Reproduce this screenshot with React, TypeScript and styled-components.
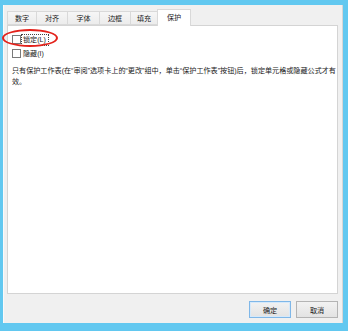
import styled, { createGlobalStyle } from 'styled-components';

const Global = createGlobalStyle`
  html, body { margin: 0; padding: 0; }
  body {
    font-family: "Liberation Sans", "Noto Sans CJK SC", sans-serif;
    font-size: 7.1px;
    color: #1a1a1a;
  }
`;

const Frame = styled.div`
  position: relative;
  box-sizing: border-box;
  width: 348px;
  height: 331px;
  background: #62c8f0;
  padding: 5px 5px 8px 3px;
  display: flex;
`;

const Dialog = styled.div`
  flex: 1;
  box-sizing: border-box;
  background: #f0f0f0;
  border-left: 1px solid #fafafa;
  border-right: 1px solid #d6d6d6;
  padding: 4px 3px 0 3px;
  display: flex;
  flex-direction: column;
`;

const TabRow = styled.div`
  display: flex;
  align-items: flex-end;
  height: 16px;
  padding-left: 1px;
`;

const Tab = styled.div<{ $w: number; $active?: boolean }>`
  box-sizing: border-box;
  width: ${p => p.$w}px;
  height: ${p => (p.$active ? 17 : 14)}px;
  margin-bottom: ${p => (p.$active ? -1 : 0)}px;
  display: flex;
  align-items: center;
  justify-content: center;
  border: 1px solid #d9d9d9;
  border-bottom: ${p => (p.$active ? 'none' : '1px solid #d9d9d9')};
  margin-left: -1px;
  background: ${p => (p.$active ? '#fff' : 'linear-gradient(#f6f6f6, #ececec)')};
  padding-bottom: ${p => (p.$active ? 3 : 0)}px;
  position: relative;
  z-index: ${p => (p.$active ? 1 : 0)};
`;

const Panel = styled.div`
  box-sizing: border-box;
  width: 331px;
  height: 269px;
  background: #fff;
  border: 1px solid #d4d4d4;
  padding: 8px 0 0 4px;
  display: flex;
  flex-direction: column;
`;

const CheckRow = styled.label`
  display: flex;
  align-items: center;
  height: 11px;
  margin-bottom: 3px;
`;

const Box = styled.span`
  box-sizing: border-box;
  width: 9px;
  height: 9px;
  border: 1px solid #7a7a7a;
  background: #fff;
  margin-right: 1px;
`;

const Label = styled.span<{ $focus?: boolean }>`
  padding: 0 2px 0 1px;
  line-height: 10px;
  outline: ${p => (p.$focus ? '1px dotted #444' : 'none')};
  outline-offset: 0;
`;

const Note = styled.p`
  margin: 4px 0 0 0;
  width: 325px;
  line-height: 11px;
  line-break: anywhere;
`;

const Footer = styled.div`
  display: flex;
  justify-content: flex-end;
  gap: 5px;
  padding-top: 7px;
  padding-right: 1px;
`;

const Button = styled.div<{ $primary?: boolean }>`
  box-sizing: border-box;
  width: 42px;
  height: 17px;
  display: flex;
  align-items: center;
  justify-content: center;
  border: 1px solid ${p => (p.$primary ? '#7fb7e8' : '#b4b4b4')};
  box-shadow: ${p => (p.$primary ? 'inset 0 0 0 1px #d6e9fa' : 'none')};
  background: linear-gradient(#f2f2f2, #e3e3e3);
`;

const Ellipse = styled.div`
  position: absolute;
  left: 2px;
  top: 29px;
  width: 56px;
  height: 18px;
  box-sizing: border-box;
  border: 2px solid #e3221b;
  border-radius: 50%;
`;

const tabs: [string, number][] = [
  ['数字', 30],
  ['对齐', 32],
  ['字体', 33],
  ['边框', 32],
  ['填充', 28],
];

export default function App() {
  return (
    <Frame>
      <Global />
      <Dialog>
        <TabRow>
          {tabs.map(([t, w]) => (
            <Tab key={t} $w={w}>{t}</Tab>
          ))}
          <Tab $w={34} $active>保护</Tab>
        </TabRow>
        <Panel>
          <CheckRow>
            <Box />
            <Label $focus>锁定(L)</Label>
          </CheckRow>
          <CheckRow>
            <Box />
            <Label>隐藏(I)</Label>
          </CheckRow>
          <Note>
            只有保护工作表(在“审阅”选项卡上的“更改”组中，单击“保护工作表”按钮)后，锁定单元格或隐藏公式才有效。
          </Note>
        </Panel>
        <Footer>
          <Button $primary>确定</Button>
          <Button>取消</Button>
        </Footer>
      </Dialog>
      <Ellipse />
    </Frame>
  );
}
